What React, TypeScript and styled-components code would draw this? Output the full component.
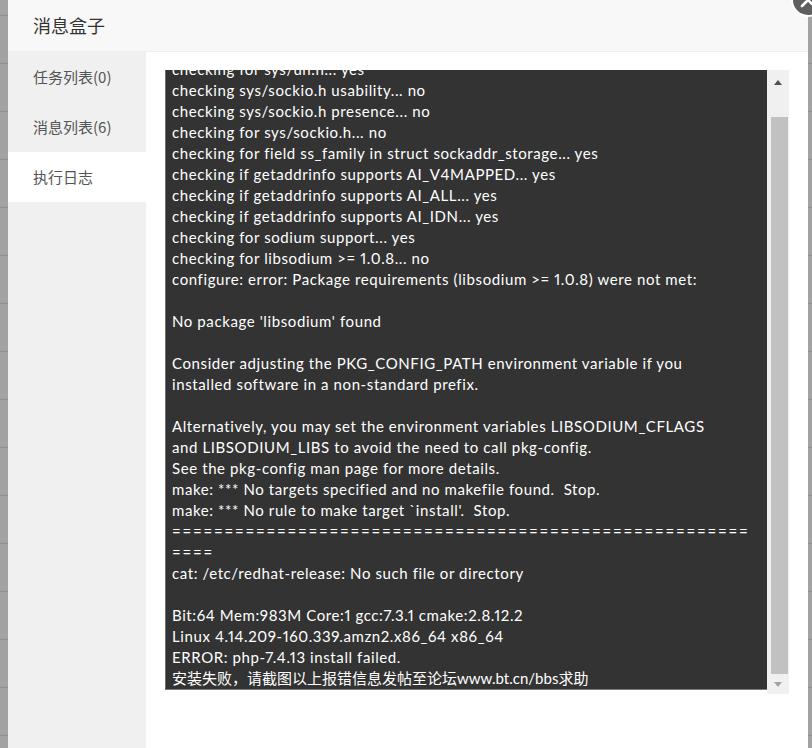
import React from "react";
import styled, { createGlobalStyle } from "styled-components";

const GlobalStyle = createGlobalStyle`
  html, body {
    margin: 0;
    padding: 0;
    height: 100%;
    overflow: hidden;
  }
  body {
    background-color: #a2a2a2;
    background-image: repeating-linear-gradient(
      to bottom,
      transparent 0,
      transparent 15px,
      #8e8e8e 15px,
      #8e8e8e 16px,
      transparent 16px,
      transparent 48px
    );
    font-family: "Lato", "Noto Sans CJK SC", sans-serif;
  }
`;

const logLines: string[] = [
  "checking for sys/un.h... yes",
  "checking sys/sockio.h usability... no",
  "checking sys/sockio.h presence... no",
  "checking for sys/sockio.h... no",
  "checking for field ss_family in struct sockaddr_storage... yes",
  "checking if getaddrinfo supports AI_V4MAPPED... yes",
  "checking if getaddrinfo supports AI_ALL... yes",
  "checking if getaddrinfo supports AI_IDN... yes",
  "checking for sodium support... yes",
  "checking for libsodium >= 1.0.8... no",
  "configure: error: Package requirements (libsodium >= 1.0.8) were not met:",
  "",
  "No package 'libsodium' found",
  "",
  "Consider adjusting the PKG_CONFIG_PATH environment variable if you",
  "installed software in a non-standard prefix.",
  "",
  "Alternatively, you may set the environment variables LIBSODIUM_CFLAGS",
  "and LIBSODIUM_LIBS to avoid the need to call pkg-config.",
  "See the pkg-config man page for more details.",
  "make: *** No targets specified and no makefile found.  Stop.",
  "make: *** No rule to make target `install'.  Stop.",
  "=".repeat(55),
  "====",
  "cat: /etc/redhat-release: No such file or directory",
  "",
  "Bit:64 Mem:983M Core:1 gcc:7.3.1 cmake:2.8.12.2",
  "Linux 4.14.209-160.339.amzn2.x86_64 x86_64",
  "ERROR: php-7.4.13 install failed.",
  "安装失败，请截图以上报错信息发帖至论坛www.bt.cn/bbs求助",
];

const tabs = [
  { label: "任务列表(0)", active: false },
  { label: "消息列表(6)", active: false },
  { label: "执行日志", active: true },
];

type LineKind = "text" | "rule" | "cjk";

const kindOf = (line: string): LineKind => {
  if (line.startsWith("=")) return "rule";
  if (/[\u4e00-\u9fff]/.test(line)) return "cjk";
  return "text";
};

const spacing: Record<LineKind, string> = {
  text: "0.6px",
  rule: "1.8px",
  cjk: "0",
};

export default function App() {
  return (
    <>
      <GlobalStyle />
      <Layer>
        <CloseButton aria-label="关闭">
          <svg width="36" height="36" viewBox="0 0 36 36">
            <circle cx="18" cy="18" r="17" fill="#fff" />
            <circle cx="18" cy="18" r="15" fill="#5f5f5f" />
            <path
              d="M12 12 L24 24 M24 12 L12 24"
              stroke="#fff"
              strokeWidth="2.6"
              strokeLinecap="round"
            />
          </svg>
        </CloseButton>
        <Header>消息盒子</Header>
        <Body>
          <Sidebar>
            {tabs.map((t) => (
              <Tab key={t.label} $active={t.active}>
                {t.label}
              </Tab>
            ))}
          </Sidebar>
          <Content>
            <LogWrap>
              <LogBox>
                <LogText>
                  {logLines.map((line, i) => (
                    <LogLine key={i} $kind={kindOf(line)}>
                      {line || "\u00a0"}
                    </LogLine>
                  ))}
                </LogText>
              </LogBox>
              <ScrollBar>
                <Arrow $dir="up" />
                <Track>
                  <Thumb />
                </Track>
                <Arrow $dir="down" />
              </ScrollBar>
            </LogWrap>
          </Content>
        </Body>
      </Layer>
    </>
  );
}

const Layer = styled.div`
  position: relative;
  margin-left: 8px;
  width: 800px;
  height: 100vh;
  background: #fff;
  display: flex;
  flex-direction: column;
`;

const CloseButton = styled.div`
  position: absolute;
  top: -18px;
  right: -18px;
  width: 36px;
  height: 36px;
  z-index: 2;
  svg {
    display: block;
  }
`;

const Header = styled.div`
  height: 51px;
  line-height: 51px;
  padding-left: 25px;
  background: #f8f8f8;
  border-bottom: 1px solid #eeeeee;
  color: #333;
  font-size: 18px;
  font-family: "Noto Sans CJK SC", sans-serif;
  flex-shrink: 0;
`;

const Body = styled.div`
  flex: 1;
  display: flex;
  min-height: 0;
`;

const Sidebar = styled.div`
  width: 138px;
  background: #f0f0f0;
  display: flex;
  flex-direction: column;
`;

const Tab = styled.div<{ $active: boolean }>`
  height: 50px;
  line-height: 50px;
  padding-left: 25px;
  font-size: 15px;
  font-family: "Noto Sans CJK SC", sans-serif;
  color: #555;
  background: ${(p) => (p.$active ? "#fff" : "transparent")};
`;

const Content = styled.div`
  flex: 1;
  padding: 18px 18px 0 19px;
`;

const LogWrap = styled.div`
  display: flex;
  align-items: flex-start;
`;

const LogBox = styled.div`
  width: 601px;
  height: 619px;
  background: #333333;
  border-left: 1px solid #6e6e6e;
  border-bottom: 1px solid #7a7a7a;
  overflow: hidden;
  display: flex;
  flex-direction: column;
  justify-content: flex-end;
`;

const LogText = styled.div`
  padding-left: 6px;
  color: #fff;
  font-size: 15px;
  line-height: 21px;
  font-family: "Lato", "Noto Sans CJK SC", sans-serif;
  font-variant-numeric: proportional-nums;
`;

const LogLine = styled.div<{ $kind: LineKind }>`
  white-space: pre;
  letter-spacing: ${(p) => spacing[p.$kind]};
`;

const ScrollBar = styled.div`
  width: 22px;
  height: 624px;
  background: #f0f0f0;
  display: flex;
  flex-direction: column;
  align-items: center;
`;

const Arrow = styled.div<{ $dir: "up" | "down" }>`
  height: ${(p) => (p.$dir === "up" ? "24px" : "20px")};
  width: 100%;
  display: flex;
  align-items: center;
  justify-content: center;
  flex-shrink: 0;
  &::before {
    content: "";
    width: 0;
    height: 0;
    border-left: 4.5px solid transparent;
    border-right: 4.5px solid transparent;
    ${(p) =>
      p.$dir === "up"
        ? "border-bottom: 5px solid #505050;"
        : "border-top: 5px solid #a3a3a3;"}
  }
`;

const Track = styled.div`
  flex: 1;
  width: 100%;
  display: flex;
  flex-direction: column;
  justify-content: flex-end;
  align-items: center;
`;

const Thumb = styled.div`
  width: 17px;
  margin-left: 3px;
  height: 557px;
  background: #c1c1c1;
`;
